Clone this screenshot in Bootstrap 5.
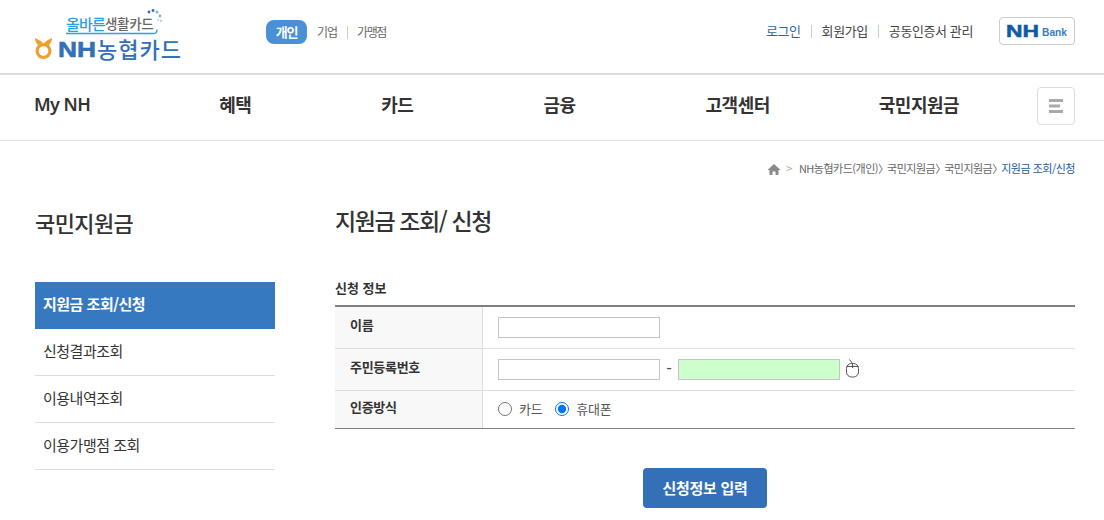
<!DOCTYPE html>
<html lang="ko">
<head>
<meta charset="utf-8">
<title>국민지원금</title>
<link href="https://cdn.jsdelivr.net/npm/bootstrap@5.3.0/dist/css/bootstrap.min.css" rel="stylesheet">
<style>
html,body{height:520px;overflow:hidden}
body{font-family:"Noto Sans CJK KR","Noto Sans",sans-serif;color:#333;background:#fff;font-size:13px}
.page-x{padding:0 29px 0 35px}
.top-bar{height:73px}
.logo-box{width:150px;height:56px;margin-top:9px;flex:none}
.gnb-tabs{margin-left:81px;margin-top:20px;height:24px;font-size:12px;color:#666;letter-spacing:-1px}
.pill-on{background:#4a90d6;color:#fff;font-weight:700;border-radius:8px;width:41px;height:24px;font-size:13px;letter-spacing:-1.2px}
.tab-first{margin-left:10px}
.tab-last{letter-spacing:-1.4px;margin-left:-1px}
.util-link{font-size:13px;color:#444;letter-spacing:-.4px}
.util-sep{width:1px;height:13px;background:#ccc;margin:0 10px}
.util-wrap{height:28px;margin-top:17px}
.login-link{color:#1e6aa8}
.bank-btn{width:76px;height:28px;border:1px solid #ccc;border-radius:4px;margin-left:26px}
.main-nav{height:68px;border-top:2px solid #ddd;border-bottom:1px solid #ddd}
.nav-txt{font-size:18px;font-weight:700;color:#333;letter-spacing:-.5px;gap:130px;margin-top:-6px}
.nav-my{font-family:"Noto Sans",sans-serif;font-weight:600;letter-spacing:-.6px;margin:0 -1px 0 -1px}
.nav-last{margin-left:-21px}
.menu-btn{width:38px;height:38px;border:1px solid #ddd;border-radius:4px;background:#fff;margin-top:-3px}
.crumb{font-size:11px;color:#666;letter-spacing:-.5px;height:55px;padding-top:19px}
.crumb b{font-weight:400;color:#1e5c9a}
.crumb-home{margin-top:3px}
.crumb-sep{display:inline-block;width:9px;overflow:hidden;text-align:center;vertical-align:top}
.crumb-arrow{color:#aaa;margin:0 7px 0 5px}
.side-col{width:240px;flex:none}
.side-title{font-size:22px;font-weight:500;color:#333;letter-spacing:-.6px;line-height:30px;margin-top:11px}
.side-list{margin-top:45px}
.side-item{height:47px;border-bottom:1px solid #ddd;padding:0 0 2px 8px;font-size:15px;color:#333;letter-spacing:-.5px}
.side-on{background:#3779c0;color:#fff;font-weight:700;border-bottom:0}
.main-col{margin-left:60px;flex:1}
.page-h{font-size:23px;font-weight:500;letter-spacing:-1.4px;line-height:34px;margin-top:7px;color:#333}
.sec-h{font-size:13px;font-weight:700;margin-top:41px;line-height:20px;height:27px;color:#333}
.form-tbl{border-top:2px solid #808080;border-bottom:1px solid #808080}
.tbl-row{height:42px;border-bottom:1px solid #ddd}
.tbl-row:last-child{border-bottom:0;height:37px}
.tbl-head{width:148px;flex:none;background:#f8f8f8;border-right:1px solid #ddd;padding:0 0 6px 15px;font-size:13px;letter-spacing:-.3px;font-weight:700;color:#333}
.tbl-cell{padding-left:15px;font-size:13px;letter-spacing:-.3px;color:#555}
.txt-in{width:162px;height:21px;border:1px solid #c4c4c4;background:#fff;padding:0;display:block}
.txt-green{background:#ccffcc}
.dash-gap{width:18px;text-align:center;font-family:"Liberation Sans",sans-serif;font-size:17px;line-height:1;letter-spacing:0;padding-bottom:5px}
.mouse-ico{margin:-2px 0 0 6px}
.radio-in{width:14px;height:14px;margin:0 7px 0 0;accent-color:#0075ff}
.radio-lbl{margin-right:13px}
.radio-cell{padding-bottom:2px}
.submit-wrap{margin-top:39px}
.submit-btn{width:124px;height:40px;background:#3370b7;color:#fff;font-weight:700;font-size:15px;letter-spacing:-.3px;border-radius:4px;border:0;margin:0 auto;display:block}
.submit-btn:hover{background:#3370b7;color:#fff}
</style>
</head>
<body>
<div class="top-bar page-x d-flex">
  <div class="logo-box">
    <svg width="150" height="56" viewBox="0 0 150 56">
      <text x="31" y="21" font-size="15" fill="#2aa1dc" font-family="Noto Sans CJK KR" font-weight="500" letter-spacing="-.8">올바른</text>
      <text x="70" y="20" font-size="13.500" fill="#666" font-family="Noto Sans CJK KR" font-weight="500" letter-spacing="-.3">생활카드</text>
      <path d="M31 24.500H119q3 0 3-4" fill="none" stroke="#2aa1dc" stroke-width="1.300"/>
      <circle cx="114" cy="3" r="1.400" fill="#2a6fb0"/><circle cx="118" cy="1.500" r="1.400" fill="#2a6fb0"/><circle cx="122" cy="3" r="1.500" fill="#7fb3dd"/><circle cx="125" cy="7" r="1.400" fill="#7fb3dd"/><circle cx="126" cy="12" r="1.300" fill="#bcd6ee"/><circle cx="123" cy="11" r="1" fill="#bcd6ee"/>
      <path d="M0 29C2 30 5 31 7 33L8.500 35 10 33C12 31 15 30 17 29 17 33 15 36 12 37H5C2 36 0 33 0 29z" fill="#f0a030"/>
      <circle cx="8.500" cy="42" r="6.400" fill="none" stroke="#f0a030" stroke-width="3.200"/>
      <text x="23" y="47.500" font-size="22" font-weight="700" fill="#3370b7" font-family="Liberation Sans" stroke="#3370b7" stroke-width=".6" textLength="38" lengthAdjust="spacingAndGlyphs">NH</text>
      <text x="62" y="48.500" font-size="22" font-weight="500" fill="#3370b7" font-family="Noto Sans CJK KR" letter-spacing="1">농협카드</text>
    </svg>
  </div>
  <div class="gnb-tabs d-flex align-items-center">
    <span class="pill-on d-flex align-items-center justify-content-center">개인</span>
    <span class="tab-first">기업</span>
    <span class="util-sep"></span>
    <span class="tab-last">가맹점</span>
  </div>
  <div class="util-wrap ms-auto d-flex align-items-center align-self-start">
    <a class="util-link login-link text-decoration-none" href="#">로그인</a>
    <span class="util-sep"></span>
    <a class="util-link text-decoration-none" href="#">회원가입</a>
    <span class="util-sep"></span>
    <a class="util-link text-decoration-none" href="#">공동인증서 관리</a>
    <span class="bank-btn d-flex align-items-center justify-content-center">
      <svg width="62" height="18" viewBox="0 0 62 18"><text x="0" y="15" font-size="16.500" font-weight="700" fill="#0f5aa5" font-family="Liberation Sans" stroke="#0f5aa5" stroke-width=".5" textLength="33" lengthAdjust="spacingAndGlyphs">NH</text><text x="36" y="14" font-size="11" font-weight="700" fill="#3a7dbd" font-family="Liberation Sans" textLength="25" lengthAdjust="spacingAndGlyphs">Bank</text></svg>
    </span>
  </div>
</div>
<nav class="main-nav page-x d-flex align-items-center">
  <div class="nav-txt d-flex">
    <span class="nav-my">My NH</span><span>혜택</span><span>카드</span><span>금융</span><span>고객센터</span><span class="nav-last">국민지원금</span>
  </div>
  <button class="menu-btn ms-auto d-flex align-items-center justify-content-center p-0" type="button" aria-label="메뉴">
    <svg width="14" height="14" viewBox="0 0 14 14" fill="#aaa"><rect y="0" width="14" height="3"/><rect y="5.500" width="11" height="3"/><rect y="11" width="14" height="3"/></svg>
  </button>
</nav>
<div class="crumb page-x d-flex justify-content-end align-items-start">
  <svg class="crumb-home" width="14" height="13" viewBox="0 0 14 13" fill="#8a8a8a"><path d="M7 1L0.500 7H2.500V12H5.500V8.500H8.500V12H11.500V7H13.500z"/></svg>
  <span class="crumb-arrow">&gt;</span>
  <span>NH농협카드(개인)<span class="crumb-sep">〉</span>국민지원금<span class="crumb-sep">〉</span>국민지원금<span class="crumb-sep">〉</span><b>지원금 조회/신청</b></span>
</div>
<div class="page-x d-flex">
  <aside class="side-col">
    <div class="side-title">국민지원금</div>
    <div class="side-list">
      <div class="side-item side-on d-flex align-items-center">지원금 조회/신청</div>
      <div class="side-item d-flex align-items-center">신청결과조회</div>
      <div class="side-item d-flex align-items-center">이용내역조회</div>
      <div class="side-item d-flex align-items-center">이용가맹점 조회</div>
    </div>
  </aside>
  <main class="main-col">
    <div class="page-h">지원금 조회/ 신청</div>
    <div class="sec-h">신청 정보</div>
    <div class="form-tbl">
      <div class="tbl-row d-flex">
        <div class="tbl-head d-flex align-items-center">이름</div>
        <div class="tbl-cell d-flex align-items-center"><input class="txt-in" type="text" aria-label="이름"></div>
      </div>
      <div class="tbl-row d-flex">
        <div class="tbl-head d-flex align-items-center">주민등록번호</div>
        <div class="tbl-cell d-flex align-items-center">
          <input class="txt-in" type="text" aria-label="앞자리"><span class="dash-gap">-</span><input class="txt-in txt-green" type="text" aria-label="뒷자리">
          <svg class="mouse-ico" width="13" height="19" viewBox="0 0 13 19" fill="none" stroke="#555"><path d="M3.500 .5L6.500 4.500"/><rect x=".5" y="4.500" width="12" height="13.500" rx="5"/><path d="M.5 7.500H12.500M6.500 4.500V9"/></svg>
        </div>
      </div>
      <div class="tbl-row d-flex">
        <div class="tbl-head d-flex align-items-center">인증방식</div>
        <div class="tbl-cell radio-cell d-flex align-items-center">
          <input class="radio-in" type="radio" name="auth" id="r1"><label for="r1" class="radio-lbl">카드</label>
          <input class="radio-in" type="radio" name="auth" id="r2" checked><label for="r2">휴대폰</label>
        </div>
      </div>
    </div>
    <div class="submit-wrap">
      <button class="btn submit-btn p-0" type="button">신청정보 입력</button>
    </div>
  </main>
</div>
<script src="https://cdn.jsdelivr.net/npm/bootstrap@5.3.0/dist/js/bootstrap.bundle.min.js"></script>
</body>
</html>
